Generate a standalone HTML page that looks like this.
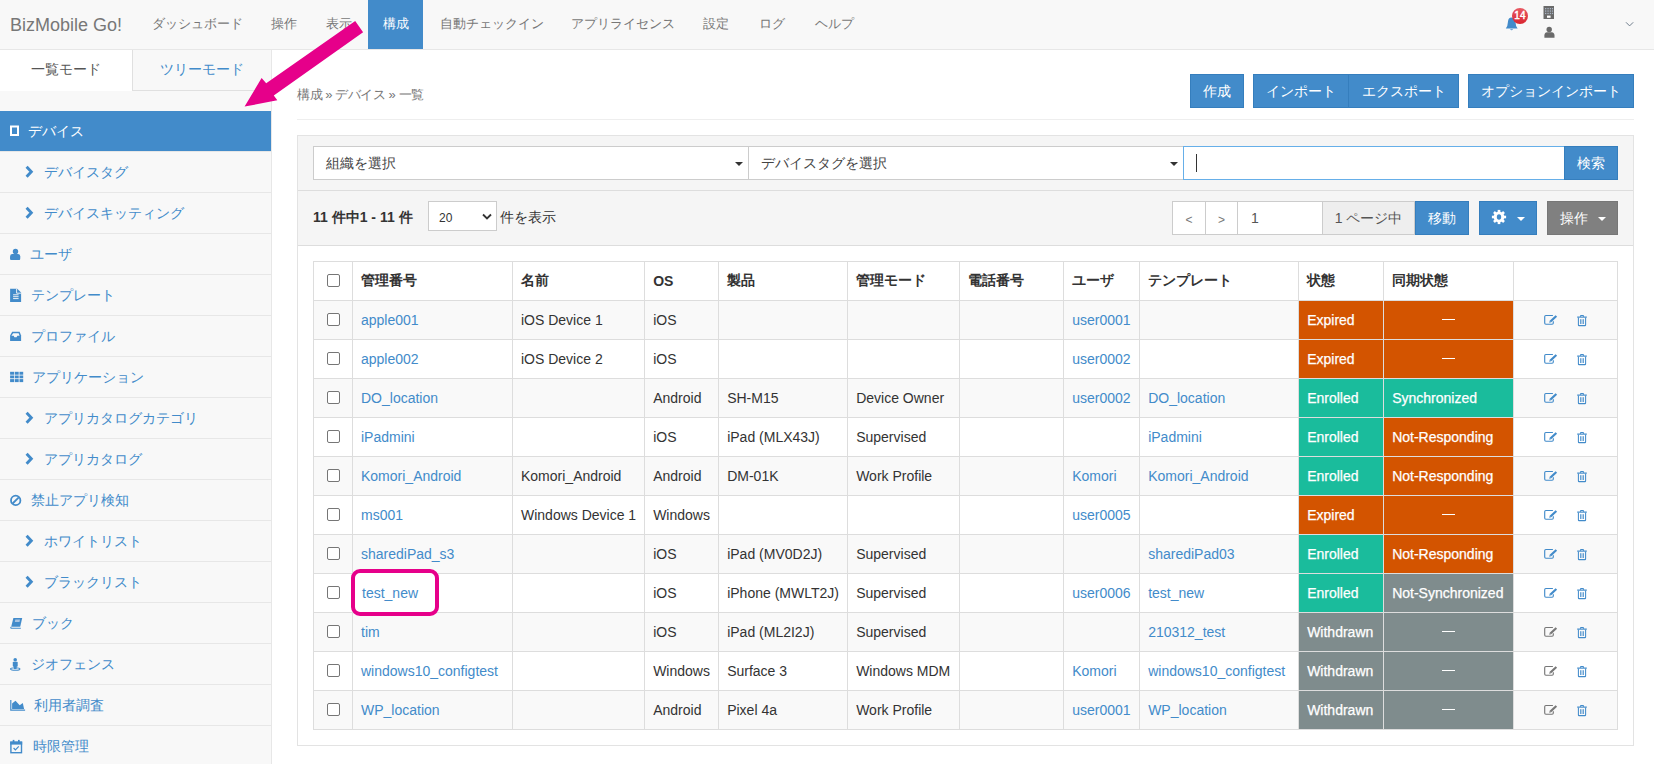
<!DOCTYPE html>
<html><head><meta charset="utf-8">
<style>
*{box-sizing:border-box;margin:0;padding:0}
html,body{width:1655px;height:764px;overflow:hidden;background:#fff;font-family:"Liberation Sans",sans-serif;font-size:14px;color:#333}
.abs{position:absolute}
#hdr{position:absolute;left:0;top:0;width:1654px;height:50px;background:#f8f8f8;border-bottom:1px solid #e7e7e7}
.brand{position:absolute;left:10px;top:15px;font-size:18px;color:#777;line-height:20px}
.nav{position:absolute;top:0;height:49px;line-height:48px;color:#777;font-size:13px;white-space:nowrap}
.nav.act{background:#428bca;color:#fff;text-align:center}
#side{position:absolute;left:0;top:50px;width:272px;height:714px;background:#f8f8f8;border-right:1px solid #e7e7e7}
.tab1{position:absolute;left:0;top:0;width:132px;height:41px;background:#fff;color:#555;text-align:center;line-height:38px}
.tab2{position:absolute;left:132px;top:0;width:139px;height:41px;border-left:1px solid #e0e0e0;border-bottom:1px solid #e0e0e0;color:#428bca;text-align:center;line-height:38px}
.si{position:absolute;left:0;width:271px;height:41px;border-bottom:1px solid #e7e7e7;color:#428bca;line-height:40px;white-space:nowrap}
.si.act{background:#428bca;color:#fff}
.si .ic{position:absolute;left:9px;top:0;height:40px;overflow:visible}
.si .tx{position:absolute;left:30px;top:0}
.si.sub .tx{left:44px}
.si.sub .ic{left:24px}
.crumb{position:absolute;left:297px;top:86px;font-size:13px;color:#777;line-height:18px;letter-spacing:-0.45px}
.hr{position:absolute;left:297px;top:119px;width:1337px;height:1px;background:#eee}
.btn{position:absolute;top:74px;height:34px;background:#428bca;border:1px solid #357ebd;color:#fff;text-align:center;line-height:32px;white-space:nowrap}
#panel{position:absolute;left:297px;top:135px;width:1337px;height:611px;background:#f5f5f5;border:1px solid #e3e3e3}
.line{position:absolute;height:1px;background:#ddd}
table{position:absolute;left:313px;top:261px;border-collapse:collapse;table-layout:fixed;background:#fff}
td,th{border:1px solid #ddd;height:39px;padding:0 8px;white-space:nowrap;overflow:hidden;text-align:left;vertical-align:middle;font-size:14px}
th{font-weight:bold;color:#333}
tr.odd td{background:#f9f9f9}
a{color:#428bca;text-decoration:none}
.cb{display:inline-block;width:13px;height:13px;border:1px solid #767676;border-radius:2px;background:#fff;vertical-align:middle;position:relative;top:-2px}
td.c0{text-align:center;padding:0}
td.exp,td.nr{background:#d35400 !important;color:#fff}
td.enr,td.syn{background:#1abc9c !important;color:#fff}
td.wd,td.ns{background:#7f8c8d !important;color:#fff}
td.dash{text-align:center}
.dsh{display:inline-block;width:13px;height:1px;background:#fff;vertical-align:middle;position:relative;top:-2px;left:0}
td.exp,td.nr,td.enr,td.syn,td.wd,td.ns{-webkit-text-stroke:0.25px #fff}
td.ops{padding:0}
.opw{position:relative;width:103px;height:38px}
.sel{position:absolute;height:34px;background:#fff;border:1px solid #ccc;color:#444}
.sel .stx{position:absolute;left:12px;top:7px;line-height:18px}
.caret{position:absolute;top:15px;width:0;height:0;border-left:4px solid transparent;border-right:4px solid transparent;border-top:4px solid #333}
.caret.w{border-top-color:#fff}
.inp{position:absolute;background:#fff;border:1px solid #66afe9}
.cur{position:absolute;left:12px;top:7px;width:1px;height:18px;background:#333}
.cnt{left:313px;top:208px;font-weight:bold;line-height:18px}
.sel2{left:428px;top:201px;width:69px;height:30px;background:#fff;border:1px solid #ccc;color:#555;font-size:12px}
.sel2 span{position:absolute;left:10px;top:9px;line-height:14px;color:#333}
.pg{position:absolute;top:201px;height:34px;background:#fff;border:1px solid #ccc;color:#777;text-align:center;line-height:32px;font-size:12px}
</style></head><body>
<div id="hdr">
  <div class="brand">BizMobile Go!</div>
  <div class="nav" style="left:152px">ダッシュボード</div>
  <div class="nav" style="left:271px">操作</div>
  <div class="nav" style="left:326px">表示</div>
  <div class="nav act" style="left:368px;width:55px">構成</div>
  <div class="nav" style="left:440px">自動チェックイン</div>
  <div class="nav" style="left:571px">アプリライセンス</div>
  <div class="nav" style="left:703px">設定</div>
  <div class="nav" style="left:759px">ログ</div>
  <div class="nav" style="left:815px">ヘルプ</div>
</div>

<div id="side">
  <div class="tab1">一覧モード</div>
  <div class="tab2">ツリーモード</div>
  <div class="si act" style="top:61px"><svg class="ic" width="14" height="40" viewBox="0 0 14 40"><rect x="2" y="15.5" width="7" height="8.5" fill="none" stroke="#fff" stroke-width="2"/><rect x="1" y="23" width="9" height="2" fill="#fff"/></svg><span class="tx" style="left:28px">デバイス</span></div>
  <div class="si sub" style="top:102px"><svg class="ic" width="12" height="40" viewBox="0 0 12 40" style="left:24px"><path d="M2.6 14.8 L7.3 19.8 L2.6 24.8" fill="none" stroke="#428bca" stroke-width="2.9" stroke-linejoin="miter" stroke-miterlimit="4"/></svg><span class="tx" style="left:44px">デバイスタグ</span></div>
  <div class="si sub" style="top:143px"><svg class="ic" width="12" height="40" viewBox="0 0 12 40" style="left:24px"><path d="M2.6 14.8 L7.3 19.8 L2.6 24.8" fill="none" stroke="#428bca" stroke-width="2.9" stroke-linejoin="miter" stroke-miterlimit="4"/></svg><span class="tx" style="left:44px">デバイスキッティング</span></div>
  <div class="si " style="top:184px"><svg class="ic" width="14" height="40" viewBox="0 0 14 40"><circle cx="6.5" cy="17.5" r="2.7" fill="#428bca"/><rect x="1.1" y="20.1" width="10.1" height="5.8" rx="2.2" fill="#428bca"/><rect x="1.1" y="23" width="10.1" height="2.9" rx="0.8" fill="#428bca"/></svg><span class="tx" style="left:30px">ユーザ</span></div>
  <div class="si " style="top:225px"><svg class="ic" width="14" height="40" viewBox="0 0 14 40"><path d="M1.1 13.8 H8.2 L12.1 17.6 V26.9 H1.1 Z" fill="#428bca"/><path d="M7.6 13.8 V18.2 H12.1" fill="none" stroke="#f8f8f8" stroke-width="0.9"/><path d="M4.1 19.8 H9.6 M4.1 21.7 H9.6 M4.1 23.6 H9.6" stroke="#f8f8f8" stroke-width="0.95"/></svg><span class="tx" style="left:31px">テンプレート</span></div>
  <div class="si " style="top:266px"><svg class="ic" width="14" height="40" viewBox="0 0 14 40"><path d="M3.2 15.8 H10.6 L12.1 19.6 V24.9 H1.1 V19.6 Z" fill="#428bca"/><path d="M4.2 17.2 H9.6 L10.6 19.8 H8.3 L7.6 21.2 H5.4 L4.7 19.8 H2.4 Z" fill="#f8f8f8"/></svg><span class="tx" style="left:31px">プロファイル</span></div>
  <div class="si " style="top:307px"><svg class="ic" width="16" height="40" viewBox="0 0 16 40"><g fill="#428bca"><rect x="1.1" y="14.8" width="4" height="2.9"/><rect x="5.8" y="14.8" width="3.9" height="2.9"/><rect x="10.5" y="14.8" width="3.7" height="2.9"/><rect x="1.1" y="18.5" width="4" height="2.8"/><rect x="5.8" y="18.5" width="3.9" height="2.8"/><rect x="10.5" y="18.5" width="3.7" height="2.8"/><rect x="1.1" y="22.1" width="4" height="3"/><rect x="5.8" y="22.1" width="3.9" height="3"/><rect x="10.5" y="22.1" width="3.7" height="3"/></g></svg><span class="tx" style="left:32px">アプリケーション</span></div>
  <div class="si sub" style="top:348px"><svg class="ic" width="12" height="40" viewBox="0 0 12 40" style="left:24px"><path d="M2.6 14.8 L7.3 19.8 L2.6 24.8" fill="none" stroke="#428bca" stroke-width="2.9" stroke-linejoin="miter" stroke-miterlimit="4"/></svg><span class="tx" style="left:44px">アプリカタログカテゴリ</span></div>
  <div class="si sub" style="top:389px"><svg class="ic" width="12" height="40" viewBox="0 0 12 40" style="left:24px"><path d="M2.6 14.8 L7.3 19.8 L2.6 24.8" fill="none" stroke="#428bca" stroke-width="2.9" stroke-linejoin="miter" stroke-miterlimit="4"/></svg><span class="tx" style="left:44px">アプリカタログ</span></div>
  <div class="si " style="top:430px"><svg class="ic" width="14" height="40" viewBox="0 0 14 40"><circle cx="6.7" cy="20.4" r="4.7" fill="none" stroke="#428bca" stroke-width="1.8"/><path d="M3.6 23.5 L9.8 17.3" stroke="#428bca" stroke-width="1.8"/></svg><span class="tx" style="left:31px">禁止アプリ検知</span></div>
  <div class="si sub" style="top:471px"><svg class="ic" width="12" height="40" viewBox="0 0 12 40" style="left:24px"><path d="M2.6 14.8 L7.3 19.8 L2.6 24.8" fill="none" stroke="#428bca" stroke-width="2.9" stroke-linejoin="miter" stroke-miterlimit="4"/></svg><span class="tx" style="left:44px">ホワイトリスト</span></div>
  <div class="si sub" style="top:512px"><svg class="ic" width="12" height="40" viewBox="0 0 12 40" style="left:24px"><path d="M2.6 14.8 L7.3 19.8 L2.6 24.8" fill="none" stroke="#428bca" stroke-width="2.9" stroke-linejoin="miter" stroke-miterlimit="4"/></svg><span class="tx" style="left:44px">ブラックリスト</span></div>
  <div class="si " style="top:553px"><svg class="ic" width="16" height="40" viewBox="0 0 16 40"><path d="M4.4 14.9 H13.2 L11.2 23.8 H2.2 Z" fill="#428bca"/><path d="M2 23.9 Q1.4 25.3 2.8 25.3 H11.8" fill="none" stroke="#428bca" stroke-width="1.1"/><path d="M6.3 16.6 H11 L10.5 19 H5.8 Z" fill="#a9c4e2"/></svg><span class="tx" style="left:32px">ブック</span></div>
  <div class="si " style="top:594px"><svg class="ic" width="14" height="40" viewBox="0 0 14 40"><circle cx="6.2" cy="15.7" r="1.8" fill="#428bca"/><rect x="3.8" y="17.8" width="4.9" height="4.9" rx="0.8" fill="#428bca"/><rect x="4.9" y="21.5" width="2.7" height="3.6" fill="#428bca"/><ellipse cx="6.2" cy="25" rx="4.7" ry="1.3" fill="none" stroke="#428bca" stroke-width="1.1"/></svg><span class="tx" style="left:31px">ジオフェンス</span></div>
  <div class="si " style="top:635px"><svg class="ic" width="18" height="40" viewBox="0 0 18 40"><path d="M1.8 15.1 V25.2 H16.1" fill="none" stroke="#428bca" stroke-width="1.2"/><path d="M3.1 23.9 V18.6 L6.5 15.7 L10.7 20.2 L13.8 17.9 L15.1 23.9 Z" fill="#428bca"/></svg><span class="tx" style="left:34px">利用者調査</span></div>
  <div class="si " style="top:676px"><svg class="ic" width="14" height="40" viewBox="0 0 14 40"><rect x="1.9" y="16.2" width="10.6" height="10.5" fill="none" stroke="#428bca" stroke-width="1.4"/><rect x="1.2" y="15.6" width="12" height="3" fill="#428bca"/><rect x="3.7" y="13.9" width="1.7" height="2.8" fill="#428bca"/><rect x="9" y="13.9" width="1.7" height="2.8" fill="#428bca"/><path d="M4.6 22 L6.4 23.8 L9.8 20.4" fill="none" stroke="#428bca" stroke-width="1.2"/></svg><span class="tx" style="left:33px">時限管理</span></div>
</div>

<div class="crumb">構成 » デバイス » 一覧</div>
<div class="hr"></div>
<div class="btn" style="left:1190px;width:54px">作成</div>
<div class="btn" style="left:1253px;width:96px">インポート</div>
<div class="btn" style="left:1348px;width:111px">エクスポート</div>
<div class="btn" style="left:1468px;width:166px">オプションインポート</div>

<div id="panel"></div>
<div class="sel" style="left:313px;top:146px;width:436px"><span class="stx">組織を選択</span><span class="caret" style="left:421px"></span></div>
<div class="sel" style="left:748px;top:146px;width:436px"><span class="stx">デバイスタグを選択</span><span class="caret" style="left:421px"></span></div>
<div class="inp" style="left:1183px;top:146px;width:382px;height:34px"><span class="cur"></span></div>
<div class="btn" style="left:1564px;top:146px;width:54px;height:34px">検索</div>
<div class="line" style="left:298px;top:190px;width:1335px"></div>
<div class="abs cnt">11 件中1 - 11 件</div>
<div class="abs sel2"><span>20</span><svg width="10" height="8" viewBox="0 0 10 8" style="position:absolute;left:53px;top:11px"><path d="M1 1.5 L5 5.5 L9 1.5" fill="none" stroke="#333" stroke-width="1.8"/></svg></div>
<div class="abs" style="left:500px;top:208px;line-height:18px">件を表示</div>
<div class="pg" style="left:1172px;width:34px;line-height:37px">&lt;</div>
<div class="pg" style="left:1205px;width:33px;line-height:37px">&gt;</div>
<div class="pg" style="left:1237px;width:86px;text-align:left;padding-left:13px;color:#555;font-size:14px">1</div>
<div class="pg" style="left:1322px;width:93px;background:#eee;color:#555;font-size:14px">1 ページ中</div>
<div class="btn" style="left:1415px;top:201px;width:54px;height:34px">移動</div>
<div class="btn" style="left:1479px;top:201px;width:58px;height:34px"><svg width="16" height="16" viewBox="0 0 16 16" style="position:absolute;left:11px;top:7px"><g fill="#fff"><circle cx="8" cy="8" r="5.4"/><rect x="6.7" y="0.9" width="2.6" height="14.2" transform="rotate(0 8 8)"/><rect x="6.7" y="0.9" width="2.6" height="14.2" transform="rotate(45 8 8)"/><rect x="6.7" y="0.9" width="2.6" height="14.2" transform="rotate(90 8 8)"/><rect x="6.7" y="0.9" width="2.6" height="14.2" transform="rotate(135 8 8)"/></g><ellipse cx="8" cy="8" rx="2.2" ry="2.8" fill="#428bca"/></svg><span class="caret w" style="left:37px;top:15px"></span></div>
<div class="btn" style="left:1547px;top:201px;width:71px;height:34px;background:#808080;border-color:#777;text-align:left;padding-left:12px">操作<span class="caret w" style="left:50px;top:15px"></span></div>
<div class="line" style="left:298px;top:245px;width:1335px"></div>
<div class="abs" style="left:298px;top:246px;width:1335px;height:499px;background:#fff"></div>
<table><colgroup><col style="width:39px"><col style="width:160px"><col style="width:132px"><col style="width:74px"><col style="width:129px"><col style="width:112px"><col style="width:104px"><col style="width:76px"><col style="width:159px"><col style="width:85px"><col style="width:130px"><col style="width:104px"></colgroup>
<tr class="hd"><td class="c0"><span class="cb"></span></td><th>管理番号</th><th>名前</th><th>OS</th><th>製品</th><th>管理モード</th><th>電話番号</th><th>ユーザ</th><th>テンプレート</th><th>状態</th><th>同期状態</th><th></th></tr>
<tr class="odd"><td class="c0"><span class="cb"></span></td><td><a>apple001</a></td><td>iOS Device 1</td><td>iOS</td><td></td><td></td><td></td><td><a>user0001</a></td><td><a></a></td><td class="exp">Expired</td><td class="nr dash"><i class="dsh"></i></td><td class="ops"><div class="opw"><svg width="15" height="13" viewBox="0 0 15 13" style="position:absolute;left:30px;top:13px"><path d="M8.9 1.5 H1.9 Q0.7 1.5 0.7 2.7 V9 Q0.7 10.2 1.9 10.2 H8.1 Q9.3 10.2 9.3 9 V7.3" fill="none" stroke="#428bca" stroke-width="1.15"/><path d="M5.1 8.7 L5.7 6.8 L11.6 1.2 L13.1 2.7 L7.2 8.2 Z" fill="#428bca"/><path d="M5.5 8.3 L5.9 7.3 L6.5 7.9 Z" fill="#fff"/></svg><svg width="11" height="13" viewBox="0 0 11 13" style="position:absolute;left:63px;top:13px"><path d="M3.5 2.8 V1.5 H6.5 V2.8" fill="none" stroke="#428bca" stroke-width="1"/><path d="M0.2 3.1 H9.8" stroke="#428bca" stroke-width="1.2"/><path d="M1.4 3.4 V10.9 Q1.4 11.6 2.1 11.6 H7.9 Q8.6 11.6 8.6 10.9 V3.4" fill="none" stroke="#428bca" stroke-width="1.05"/><path d="M3.5 5.2 V10 M5 5.2 V10 M6.5 5.2 V10" stroke="#428bca" stroke-width="0.8"/></svg></div></td></tr>
<tr class=""><td class="c0"><span class="cb"></span></td><td><a>apple002</a></td><td>iOS Device 2</td><td>iOS</td><td></td><td></td><td></td><td><a>user0002</a></td><td><a></a></td><td class="exp">Expired</td><td class="nr dash"><i class="dsh"></i></td><td class="ops"><div class="opw"><svg width="15" height="13" viewBox="0 0 15 13" style="position:absolute;left:30px;top:13px"><path d="M8.9 1.5 H1.9 Q0.7 1.5 0.7 2.7 V9 Q0.7 10.2 1.9 10.2 H8.1 Q9.3 10.2 9.3 9 V7.3" fill="none" stroke="#428bca" stroke-width="1.15"/><path d="M5.1 8.7 L5.7 6.8 L11.6 1.2 L13.1 2.7 L7.2 8.2 Z" fill="#428bca"/><path d="M5.5 8.3 L5.9 7.3 L6.5 7.9 Z" fill="#fff"/></svg><svg width="11" height="13" viewBox="0 0 11 13" style="position:absolute;left:63px;top:13px"><path d="M3.5 2.8 V1.5 H6.5 V2.8" fill="none" stroke="#428bca" stroke-width="1"/><path d="M0.2 3.1 H9.8" stroke="#428bca" stroke-width="1.2"/><path d="M1.4 3.4 V10.9 Q1.4 11.6 2.1 11.6 H7.9 Q8.6 11.6 8.6 10.9 V3.4" fill="none" stroke="#428bca" stroke-width="1.05"/><path d="M3.5 5.2 V10 M5 5.2 V10 M6.5 5.2 V10" stroke="#428bca" stroke-width="0.8"/></svg></div></td></tr>
<tr class="odd"><td class="c0"><span class="cb"></span></td><td><a>DO_location</a></td><td></td><td>Android</td><td>SH-M15</td><td>Device Owner</td><td></td><td><a>user0002</a></td><td><a>DO_location</a></td><td class="enr">Enrolled</td><td class="syn">Synchronized</td><td class="ops"><div class="opw"><svg width="15" height="13" viewBox="0 0 15 13" style="position:absolute;left:30px;top:13px"><path d="M8.9 1.5 H1.9 Q0.7 1.5 0.7 2.7 V9 Q0.7 10.2 1.9 10.2 H8.1 Q9.3 10.2 9.3 9 V7.3" fill="none" stroke="#428bca" stroke-width="1.15"/><path d="M5.1 8.7 L5.7 6.8 L11.6 1.2 L13.1 2.7 L7.2 8.2 Z" fill="#428bca"/><path d="M5.5 8.3 L5.9 7.3 L6.5 7.9 Z" fill="#fff"/></svg><svg width="11" height="13" viewBox="0 0 11 13" style="position:absolute;left:63px;top:13px"><path d="M3.5 2.8 V1.5 H6.5 V2.8" fill="none" stroke="#428bca" stroke-width="1"/><path d="M0.2 3.1 H9.8" stroke="#428bca" stroke-width="1.2"/><path d="M1.4 3.4 V10.9 Q1.4 11.6 2.1 11.6 H7.9 Q8.6 11.6 8.6 10.9 V3.4" fill="none" stroke="#428bca" stroke-width="1.05"/><path d="M3.5 5.2 V10 M5 5.2 V10 M6.5 5.2 V10" stroke="#428bca" stroke-width="0.8"/></svg></div></td></tr>
<tr class=""><td class="c0"><span class="cb"></span></td><td><a>iPadmini</a></td><td></td><td>iOS</td><td>iPad (MLX43J)</td><td>Supervised</td><td></td><td><a></a></td><td><a>iPadmini</a></td><td class="enr">Enrolled</td><td class="nr">Not-Responding</td><td class="ops"><div class="opw"><svg width="15" height="13" viewBox="0 0 15 13" style="position:absolute;left:30px;top:13px"><path d="M8.9 1.5 H1.9 Q0.7 1.5 0.7 2.7 V9 Q0.7 10.2 1.9 10.2 H8.1 Q9.3 10.2 9.3 9 V7.3" fill="none" stroke="#428bca" stroke-width="1.15"/><path d="M5.1 8.7 L5.7 6.8 L11.6 1.2 L13.1 2.7 L7.2 8.2 Z" fill="#428bca"/><path d="M5.5 8.3 L5.9 7.3 L6.5 7.9 Z" fill="#fff"/></svg><svg width="11" height="13" viewBox="0 0 11 13" style="position:absolute;left:63px;top:13px"><path d="M3.5 2.8 V1.5 H6.5 V2.8" fill="none" stroke="#428bca" stroke-width="1"/><path d="M0.2 3.1 H9.8" stroke="#428bca" stroke-width="1.2"/><path d="M1.4 3.4 V10.9 Q1.4 11.6 2.1 11.6 H7.9 Q8.6 11.6 8.6 10.9 V3.4" fill="none" stroke="#428bca" stroke-width="1.05"/><path d="M3.5 5.2 V10 M5 5.2 V10 M6.5 5.2 V10" stroke="#428bca" stroke-width="0.8"/></svg></div></td></tr>
<tr class="odd"><td class="c0"><span class="cb"></span></td><td><a>Komori_Android</a></td><td>Komori_Android</td><td>Android</td><td>DM-01K</td><td>Work Profile</td><td></td><td><a>Komori</a></td><td><a>Komori_Android</a></td><td class="enr">Enrolled</td><td class="nr">Not-Responding</td><td class="ops"><div class="opw"><svg width="15" height="13" viewBox="0 0 15 13" style="position:absolute;left:30px;top:13px"><path d="M8.9 1.5 H1.9 Q0.7 1.5 0.7 2.7 V9 Q0.7 10.2 1.9 10.2 H8.1 Q9.3 10.2 9.3 9 V7.3" fill="none" stroke="#428bca" stroke-width="1.15"/><path d="M5.1 8.7 L5.7 6.8 L11.6 1.2 L13.1 2.7 L7.2 8.2 Z" fill="#428bca"/><path d="M5.5 8.3 L5.9 7.3 L6.5 7.9 Z" fill="#fff"/></svg><svg width="11" height="13" viewBox="0 0 11 13" style="position:absolute;left:63px;top:13px"><path d="M3.5 2.8 V1.5 H6.5 V2.8" fill="none" stroke="#428bca" stroke-width="1"/><path d="M0.2 3.1 H9.8" stroke="#428bca" stroke-width="1.2"/><path d="M1.4 3.4 V10.9 Q1.4 11.6 2.1 11.6 H7.9 Q8.6 11.6 8.6 10.9 V3.4" fill="none" stroke="#428bca" stroke-width="1.05"/><path d="M3.5 5.2 V10 M5 5.2 V10 M6.5 5.2 V10" stroke="#428bca" stroke-width="0.8"/></svg></div></td></tr>
<tr class=""><td class="c0"><span class="cb"></span></td><td><a>ms001</a></td><td>Windows Device 1</td><td>Windows</td><td></td><td></td><td></td><td><a>user0005</a></td><td><a></a></td><td class="exp">Expired</td><td class="nr dash"><i class="dsh"></i></td><td class="ops"><div class="opw"><svg width="15" height="13" viewBox="0 0 15 13" style="position:absolute;left:30px;top:13px"><path d="M8.9 1.5 H1.9 Q0.7 1.5 0.7 2.7 V9 Q0.7 10.2 1.9 10.2 H8.1 Q9.3 10.2 9.3 9 V7.3" fill="none" stroke="#428bca" stroke-width="1.15"/><path d="M5.1 8.7 L5.7 6.8 L11.6 1.2 L13.1 2.7 L7.2 8.2 Z" fill="#428bca"/><path d="M5.5 8.3 L5.9 7.3 L6.5 7.9 Z" fill="#fff"/></svg><svg width="11" height="13" viewBox="0 0 11 13" style="position:absolute;left:63px;top:13px"><path d="M3.5 2.8 V1.5 H6.5 V2.8" fill="none" stroke="#428bca" stroke-width="1"/><path d="M0.2 3.1 H9.8" stroke="#428bca" stroke-width="1.2"/><path d="M1.4 3.4 V10.9 Q1.4 11.6 2.1 11.6 H7.9 Q8.6 11.6 8.6 10.9 V3.4" fill="none" stroke="#428bca" stroke-width="1.05"/><path d="M3.5 5.2 V10 M5 5.2 V10 M6.5 5.2 V10" stroke="#428bca" stroke-width="0.8"/></svg></div></td></tr>
<tr class="odd"><td class="c0"><span class="cb"></span></td><td><a>sharediPad_s3</a></td><td></td><td>iOS</td><td>iPad (MV0D2J)</td><td>Supervised</td><td></td><td><a></a></td><td><a>sharediPad03</a></td><td class="enr">Enrolled</td><td class="nr">Not-Responding</td><td class="ops"><div class="opw"><svg width="15" height="13" viewBox="0 0 15 13" style="position:absolute;left:30px;top:13px"><path d="M8.9 1.5 H1.9 Q0.7 1.5 0.7 2.7 V9 Q0.7 10.2 1.9 10.2 H8.1 Q9.3 10.2 9.3 9 V7.3" fill="none" stroke="#428bca" stroke-width="1.15"/><path d="M5.1 8.7 L5.7 6.8 L11.6 1.2 L13.1 2.7 L7.2 8.2 Z" fill="#428bca"/><path d="M5.5 8.3 L5.9 7.3 L6.5 7.9 Z" fill="#fff"/></svg><svg width="11" height="13" viewBox="0 0 11 13" style="position:absolute;left:63px;top:13px"><path d="M3.5 2.8 V1.5 H6.5 V2.8" fill="none" stroke="#428bca" stroke-width="1"/><path d="M0.2 3.1 H9.8" stroke="#428bca" stroke-width="1.2"/><path d="M1.4 3.4 V10.9 Q1.4 11.6 2.1 11.6 H7.9 Q8.6 11.6 8.6 10.9 V3.4" fill="none" stroke="#428bca" stroke-width="1.05"/><path d="M3.5 5.2 V10 M5 5.2 V10 M6.5 5.2 V10" stroke="#428bca" stroke-width="0.8"/></svg></div></td></tr>
<tr class=""><td class="c0"><span class="cb"></span></td><td><a>test_new</a></td><td></td><td>iOS</td><td>iPhone (MWLT2J)</td><td>Supervised</td><td></td><td><a>user0006</a></td><td><a>test_new</a></td><td class="enr">Enrolled</td><td class="ns">Not-Synchronized</td><td class="ops"><div class="opw"><svg width="15" height="13" viewBox="0 0 15 13" style="position:absolute;left:30px;top:13px"><path d="M8.9 1.5 H1.9 Q0.7 1.5 0.7 2.7 V9 Q0.7 10.2 1.9 10.2 H8.1 Q9.3 10.2 9.3 9 V7.3" fill="none" stroke="#428bca" stroke-width="1.15"/><path d="M5.1 8.7 L5.7 6.8 L11.6 1.2 L13.1 2.7 L7.2 8.2 Z" fill="#428bca"/><path d="M5.5 8.3 L5.9 7.3 L6.5 7.9 Z" fill="#fff"/></svg><svg width="11" height="13" viewBox="0 0 11 13" style="position:absolute;left:63px;top:13px"><path d="M3.5 2.8 V1.5 H6.5 V2.8" fill="none" stroke="#428bca" stroke-width="1"/><path d="M0.2 3.1 H9.8" stroke="#428bca" stroke-width="1.2"/><path d="M1.4 3.4 V10.9 Q1.4 11.6 2.1 11.6 H7.9 Q8.6 11.6 8.6 10.9 V3.4" fill="none" stroke="#428bca" stroke-width="1.05"/><path d="M3.5 5.2 V10 M5 5.2 V10 M6.5 5.2 V10" stroke="#428bca" stroke-width="0.8"/></svg></div></td></tr>
<tr class="odd"><td class="c0"><span class="cb"></span></td><td><a>tim</a></td><td></td><td>iOS</td><td>iPad (ML2I2J)</td><td>Supervised</td><td></td><td><a></a></td><td><a>210312_test</a></td><td class="wd">Withdrawn</td><td class="ns dash"><i class="dsh"></i></td><td class="ops"><div class="opw"><svg width="15" height="13" viewBox="0 0 15 13" style="position:absolute;left:30px;top:13px"><path d="M8.9 1.5 H1.9 Q0.7 1.5 0.7 2.7 V9 Q0.7 10.2 1.9 10.2 H8.1 Q9.3 10.2 9.3 9 V7.3" fill="none" stroke="#777" stroke-width="1.15"/><path d="M5.1 8.7 L5.7 6.8 L11.6 1.2 L13.1 2.7 L7.2 8.2 Z" fill="#777"/><path d="M5.5 8.3 L5.9 7.3 L6.5 7.9 Z" fill="#fff"/></svg><svg width="11" height="13" viewBox="0 0 11 13" style="position:absolute;left:63px;top:13px"><path d="M3.5 2.8 V1.5 H6.5 V2.8" fill="none" stroke="#428bca" stroke-width="1"/><path d="M0.2 3.1 H9.8" stroke="#428bca" stroke-width="1.2"/><path d="M1.4 3.4 V10.9 Q1.4 11.6 2.1 11.6 H7.9 Q8.6 11.6 8.6 10.9 V3.4" fill="none" stroke="#428bca" stroke-width="1.05"/><path d="M3.5 5.2 V10 M5 5.2 V10 M6.5 5.2 V10" stroke="#428bca" stroke-width="0.8"/></svg></div></td></tr>
<tr class=""><td class="c0"><span class="cb"></span></td><td><a>windows10_configtest</a></td><td></td><td>Windows</td><td>Surface 3</td><td>Windows MDM</td><td></td><td><a>Komori</a></td><td><a>windows10_configtest</a></td><td class="wd">Withdrawn</td><td class="ns dash"><i class="dsh"></i></td><td class="ops"><div class="opw"><svg width="15" height="13" viewBox="0 0 15 13" style="position:absolute;left:30px;top:13px"><path d="M8.9 1.5 H1.9 Q0.7 1.5 0.7 2.7 V9 Q0.7 10.2 1.9 10.2 H8.1 Q9.3 10.2 9.3 9 V7.3" fill="none" stroke="#777" stroke-width="1.15"/><path d="M5.1 8.7 L5.7 6.8 L11.6 1.2 L13.1 2.7 L7.2 8.2 Z" fill="#777"/><path d="M5.5 8.3 L5.9 7.3 L6.5 7.9 Z" fill="#fff"/></svg><svg width="11" height="13" viewBox="0 0 11 13" style="position:absolute;left:63px;top:13px"><path d="M3.5 2.8 V1.5 H6.5 V2.8" fill="none" stroke="#428bca" stroke-width="1"/><path d="M0.2 3.1 H9.8" stroke="#428bca" stroke-width="1.2"/><path d="M1.4 3.4 V10.9 Q1.4 11.6 2.1 11.6 H7.9 Q8.6 11.6 8.6 10.9 V3.4" fill="none" stroke="#428bca" stroke-width="1.05"/><path d="M3.5 5.2 V10 M5 5.2 V10 M6.5 5.2 V10" stroke="#428bca" stroke-width="0.8"/></svg></div></td></tr>
<tr class="odd"><td class="c0"><span class="cb"></span></td><td><a>WP_location</a></td><td></td><td>Android</td><td>Pixel 4a</td><td>Work Profile</td><td></td><td><a>user0001</a></td><td><a>WP_location</a></td><td class="wd">Withdrawn</td><td class="ns dash"><i class="dsh"></i></td><td class="ops"><div class="opw"><svg width="15" height="13" viewBox="0 0 15 13" style="position:absolute;left:30px;top:13px"><path d="M8.9 1.5 H1.9 Q0.7 1.5 0.7 2.7 V9 Q0.7 10.2 1.9 10.2 H8.1 Q9.3 10.2 9.3 9 V7.3" fill="none" stroke="#777" stroke-width="1.15"/><path d="M5.1 8.7 L5.7 6.8 L11.6 1.2 L13.1 2.7 L7.2 8.2 Z" fill="#777"/><path d="M5.5 8.3 L5.9 7.3 L6.5 7.9 Z" fill="#fff"/></svg><svg width="11" height="13" viewBox="0 0 11 13" style="position:absolute;left:63px;top:13px"><path d="M3.5 2.8 V1.5 H6.5 V2.8" fill="none" stroke="#428bca" stroke-width="1"/><path d="M0.2 3.1 H9.8" stroke="#428bca" stroke-width="1.2"/><path d="M1.4 3.4 V10.9 Q1.4 11.6 2.1 11.6 H7.9 Q8.6 11.6 8.6 10.9 V3.4" fill="none" stroke="#428bca" stroke-width="1.05"/><path d="M3.5 5.2 V10 M5 5.2 V10 M6.5 5.2 V10" stroke="#428bca" stroke-width="0.8"/></svg></div></td></tr>
</table>


<div class="abs" style="left:351px;top:569px;width:88px;height:47px;border:4px solid #e6008a;border-radius:9px;background:#fff"></div>
<div class="abs" style="left:362px;top:584px;line-height:18px;color:#428bca">test_new</div>
<svg class="abs" style="left:0;top:0" width="400" height="120" viewBox="0 0 400 120"><polygon points="355.2,21.1 363.1,32.3 273.8,95.6 277.3,100.3 244.6,106.6 261.6,78.1 266.2,83.3" fill="#e6008a"/></svg>
<svg class="abs" style="left:1500px;top:0" width="70" height="45" viewBox="0 0 70 45">
 <path d="M11.5 17.5 Q8.3 17.7 8 21.5 Q7.8 26 5.8 28.6 H17.6 Q15.6 26 15.4 21.5 Q15.1 17.7 11.5 17.5 Z" fill="#428bca"/>
 <path d="M10 29.2 Q11.6 31.4 13.2 29.2 Z" fill="#428bca"/>
 <defs><linearGradient id="bg" x1="0" y1="0" x2="0" y2="1"><stop offset="0" stop-color="#e85a64"/><stop offset="1" stop-color="#d9252f"/></linearGradient></defs>
 <circle cx="20" cy="16" r="8" fill="url(#bg)"/>
 <rect x="43.5" y="6" width="10.5" height="13" fill="#6a6a6a"/>
 <g fill="#a8b4c4"><rect x="45" y="8" width="1.3" height="1.3"/><rect x="47.4" y="8" width="1.3" height="1.3"/><rect x="49.8" y="8" width="1.3" height="1.3"/><rect x="52" y="8" width="1.1" height="1.3"/>
 <rect x="45" y="10.4" width="1.3" height="1.3"/><rect x="47.4" y="10.4" width="1.3" height="1.3"/><rect x="49.8" y="10.4" width="1.3" height="1.3"/><rect x="52" y="10.4" width="1.1" height="1.3"/>
 <rect x="45" y="12.8" width="1.3" height="1.3"/><rect x="47.4" y="12.8" width="1.3" height="1.3"/><rect x="49.8" y="12.8" width="1.3" height="1.3"/><rect x="52" y="12.8" width="1.1" height="1.3"/></g>
 <rect x="47" y="15.6" width="3.6" height="2.2" fill="#fff"/>
 <circle cx="49.2" cy="29.5" r="2.7" fill="#6a6a6a"/>
 <path d="M44.4 37.7 V35.5 Q44.4 32.5 47 32.3 H51.6 Q54.5 32.5 54.5 35.5 V37.7 Z" fill="#6a6a6a"/>
</svg>
<div class="abs" style="left:1512px;top:9px;width:16px;text-align:center;color:#fff;font-size:10px;line-height:13px;letter-spacing:0.3px;-webkit-text-stroke:0.45px #fff">14</div>
<svg class="abs" style="left:1622px;top:18px" width="14" height="12" viewBox="0 0 14 12"><path d="M4 4.3 L7.6 7.9 L11.2 4.3" fill="none" stroke="#6f7d8c" stroke-width="1"/></svg>
</body></html>
